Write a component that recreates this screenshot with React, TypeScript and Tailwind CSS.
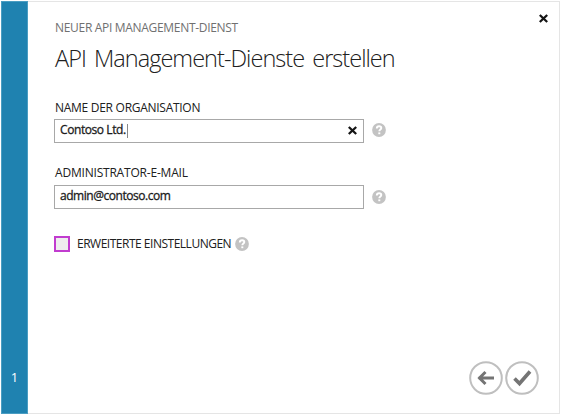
import type { ReactNode } from 'react';

function Help() {
  return (
    <svg width="14" height="14" viewBox="0 0 14 14" className="block shrink-0" aria-label="Hilfe">
      <circle cx="7" cy="7" r="6.9" fill="#c3c3c3" />
      <path d="M4.8 5.4c0-1.5 1-2.2 2.3-2.2s2.2.7 2.2 1.9c0 1.5-2 1.5-2 3.2" fill="none" stroke="#fff" strokeWidth="1.9" />
      <rect x="6.3" y="9.4" width="2" height="1.8" fill="#fff" />
    </svg>
  );
}

function Cross() {
  return (
    <svg width="9" height="9" viewBox="0 0 9 9" className="block shrink-0">
      <path d="M.8 1l7.4 7M8.2 1L.8 8" stroke="#151515" strokeWidth="2.3" />
    </svg>
  );
}

function Field({ children }: { children: ReactNode }) {
  return (
    <div className="-ml-px flex h-[24px] w-[310px] items-center border border-[#a8a8a8] pl-[5px] pr-[6px] text-[12px] leading-[16px] text-[#1b1b1b]">
      {children}
    </div>
  );
}

export default function App() {
  return (
    <div className="h-[416px] w-[562px] overflow-hidden bg-white pl-px pt-px font-['Open_Sans','Noto_Sans',sans-serif]">
      <div className="flex h-[413px] w-[559px] border-y border-r border-[#e5e5e5]">
        <aside className="-my-px flex w-[27px] shrink-0 flex-col justify-end border border-[#4a9dc2] bg-[#1f82b0] pb-[27px] text-center text-[13px] leading-[18px] text-white">
          1
        </aside>
        <main className="relative flex flex-1 flex-col pl-[27px]">
          <div className="mt-[17px] h-[18px] whitespace-nowrap text-[12px] leading-[18px] text-[#707070]">
            <span className="tracking-[-0.31px]">NEUER API MANAGEMENT-DIENST</span>
          </div>
          <h1 className="mt-[5px] h-[32px] whitespace-nowrap text-[23.5px] font-light leading-[32px] text-[#202020]">
            <span className="tracking-[-0.97px] [word-spacing:3px]">API Management-Dienste erstellen</span>
          </h1>
          <div className="mt-[25px] h-[18px] whitespace-nowrap text-[12px] leading-[18px] text-[#202020]">
            <span className="tracking-[-0.28px]">NAME DER ORGANISATION</span>
          </div>
          <div className="mt-[2px] flex items-center gap-[8px]">
            <Field>
              <span className="mb-[2px] tracking-[-0.42px] [-webkit-text-stroke:0.3px_#1b1b1b]">Contoso Ltd.</span>
              <span className="ml-px h-[14px] w-px bg-[#888]" />
              <span className="mb-[2px] ml-auto"><Cross /></span>
            </Field>
            <span className="mb-[2px]"><Help /></span>
          </div>
          <div className="mt-[21px] h-[18px] whitespace-nowrap text-[12px] leading-[18px] text-[#202020]">
            <span className="tracking-[-0.2px]">ADMINISTRATOR-E-MAIL</span>
          </div>
          <div className="mt-[3px] flex items-center gap-[8px]">
            <Field>
              <span className="mb-[2px] tracking-[-0.46px] [-webkit-text-stroke:0.3px_#1b1b1b]">admin@contoso.com</span>
            </Field>
            <Help />
          </div>
          <div className="mt-[26px] flex h-[18px] items-center whitespace-nowrap text-[12px] leading-[18px] text-[#202020]">
            <span className="-ml-px mr-[7px] size-[16px] border-2 border-[#c13ccf] bg-[#eeeeee]" />
            <span className="tracking-[-0.49px]">ERWEITERTE EINSTELLUNGEN</span>
            <span className="ml-[4px]"><Help /></span>
          </div>
          <div className="mb-[18px] mr-[20px] mt-auto flex justify-end gap-[2px]">
            <svg width="34" height="34" viewBox="0 0 34 34">
              <circle cx="17" cy="17" r="15.8" fill="none" stroke="#bfbfbf" strokeWidth="2" />
              <path d="M9.5 17H25M16.5 11l-6 6 6 6" fill="none" stroke="#747474" strokeWidth="3" />
            </svg>
            <svg width="34" height="34" viewBox="0 0 34 34">
              <circle cx="17" cy="17" r="15.8" fill="none" stroke="#bfbfbf" strokeWidth="2" />
              <path d="M9.5 17.5l5 5L25 10.5" fill="none" stroke="#747474" strokeWidth="3.6" />
            </svg>
          </div>
          <button className="absolute right-[11px] top-[12px]" aria-label="Schließen"><Cross /></button>
        </main>
      </div>
    </div>
  );
}
